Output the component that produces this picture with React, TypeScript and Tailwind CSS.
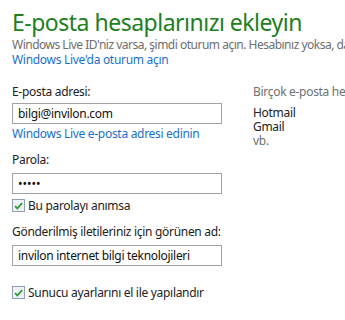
import React from "react";

function Check() {
  return (
    <span className="w-[13px] h-[13px] border border-[#8f9fb6] bg-[#eef2f7] flex items-center justify-center shrink-0">
      <svg width="9" height="8" viewBox="0 0 9 8">
        <path d="M1 4.2 L3.4 6.5 L8 1.2" fill="none" stroke="#2e9b2e" strokeWidth="1.8" />
      </svg>
    </span>
  );
}

export default function App() {
  const font = { fontFamily: '"Noto Sans", "Open Sans", sans-serif' };
  return (
    <div className="w-[345px] h-[320px] bg-white overflow-hidden relative" style={font}>
      <div className="pl-[12px] pt-[7px]">
        <div className="text-[23px] leading-[30px] tracking-[-0.5px] text-[#1d801d] whitespace-nowrap">E-posta hesaplarınızı ekleyin</div>
        <div className="text-[12px] leading-[15px] tracking-[-0.5px] text-[#6e6e6e] whitespace-nowrap">
          Windows Live ID'niz varsa, şimdi oturum açın. Hesabınız yoksa, daha sonra oluşturabilirsiniz.
        </div>
        <div className="text-[12px] leading-[15px] tracking-[-0.3px] text-[#1a6fd0] whitespace-nowrap">Windows Live'da oturum açın</div>

        <div className="flex mt-[18px] tracking-[-0.3px]">
          <div className="w-[241px] shrink-0">
            <div className="text-[12px] leading-[14px] text-[#222]">E-posta adresi:</div>
            <div className="mt-[4px] w-[210px] h-[21px] border border-[#a3a3a3] flex items-center pl-[5px] text-[12px] text-[#111]">
              bilgi@invilon.com
            </div>
            <div className="mt-[3px] text-[12px] leading-[14px] text-[#1a6fd0] whitespace-nowrap">Windows Live e-posta adresi edinin</div>

            <div className="mt-[12px] text-[12px] leading-[14px] text-[#222]">Parola:</div>
            <div className="mt-[6px] w-[210px] h-[21px] border border-[#a3a3a3] flex items-center pl-[5px] text-[12px] text-[#111] tracking-[0px]">
              •••••
            </div>
            <div className="mt-[5px] h-[13px] flex items-center gap-[3px] text-[12px] leading-[14px] text-[#222]">
              <Check />
              <span>Bu parolayı anımsa</span>
            </div>

            <div className="mt-[13px] text-[12px] leading-[14px] text-[#222] whitespace-nowrap">Gönderilmiş iletileriniz için görünen ad:</div>
            <div className="mt-[6px] w-[210px] h-[21px] border border-[#a3a3a3] flex items-center pl-[5px] text-[12px] text-[#111] whitespace-nowrap">
              invilon internet bilgi teknolojileri
            </div>
            <div className="mt-[20px] h-[13px] flex items-center gap-[3px] text-[12px] leading-[14px] text-[#222]">
              <Check />
              <span className="whitespace-nowrap">Sunucu ayarlarını el ile yapılandır</span>
            </div>
          </div>
          <div className="text-[12px] leading-[14px] whitespace-nowrap">
            <div className="text-[#707070]">Birçok e-posta hesabını kullanabilirsiniz</div>
            <div className="mt-[7px] text-[#222]">Hotmail</div>
            <div className="text-[#222]">Gmail</div>
            <div className="text-[#707070]">vb.</div>
          </div>
        </div>
      </div>
    </div>
  );
}
